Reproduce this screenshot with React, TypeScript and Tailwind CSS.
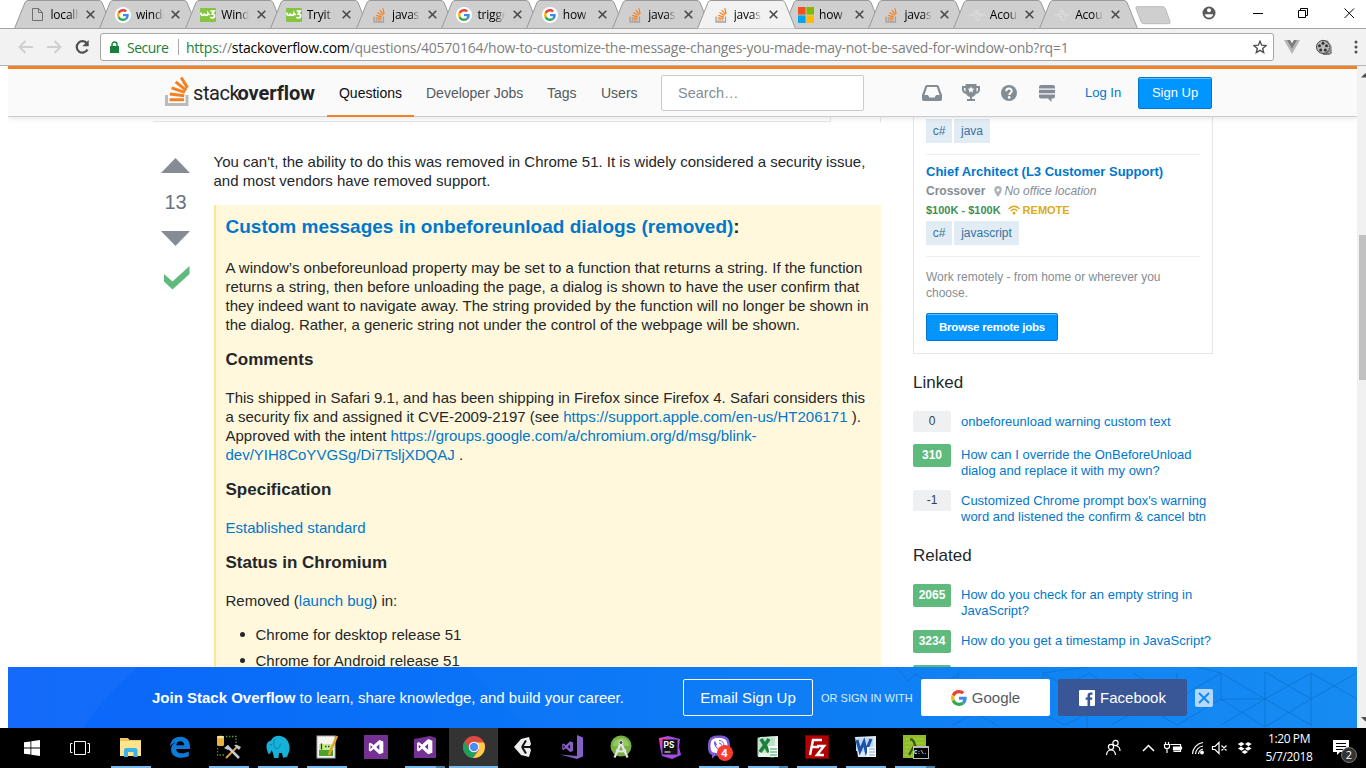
import React from "react";

type Kids = { children?: React.ReactNode; className?: string };

/* ---------- favicons ---------- */
const GoogleG = ({ size = 16 }: { size?: number }) => (
  <svg width={size} height={size} viewBox="0 0 48 48">
    <path fill="#EA4335" d="M24 9.5c3.54 0 6.71 1.22 9.21 3.6l6.85-6.85C35.9 2.38 30.47 0 24 0 14.62 0 6.51 5.38 2.56 13.22l7.98 6.19C12.43 13.72 17.74 9.5 24 9.5z" />
    <path fill="#4285F4" d="M46.98 24.55c0-1.57-.15-3.09-.38-4.55H24v9.02h12.94c-.58 2.96-2.26 5.48-4.78 7.18l7.73 6c4.51-4.18 7.09-10.36 7.09-17.65z" />
    <path fill="#FBBC05" d="M10.53 28.59c-.48-1.45-.76-2.99-.76-4.59s.27-3.14.76-4.59l-7.98-6.19C.92 16.46 0 20.12 0 24c0 3.88.92 7.54 2.56 10.78l7.97-6.19z" />
    <path fill="#34A853" d="M24 48c6.48 0 11.93-2.13 15.89-5.81l-7.73-6c-2.15 1.45-4.92 2.3-8.16 2.3-6.26 0-11.57-4.22-13.47-9.91l-7.98 6.19C6.51 42.62 14.62 48 24 48z" />
  </svg>
);

const favicons: Record<string, React.ReactNode> = {
  file: (
    <svg width="16" height="16" viewBox="0 0 16 16" fill="none" stroke="#6e6e6e">
      <path d="M2.500 1.500h6l4 4v8h-10z M8.500 1.500v4h4" />
    </svg>
  ),
  google: (
    <span className="flex h-4 w-4 items-center justify-center rounded-full bg-white">
      <GoogleG size={12} />
    </span>
  ),
  w3: (
    <svg width="16" height="16" viewBox="0 0 16 16" fill="none" stroke="#fff" strokeWidth="1.700">
      <rect width="16" height="14" y="1" rx="1" fill="#85c440" stroke="none" />
      <path d="M1 5.500v1.200q0 1.600 1.500 1.600T4.300 6.500q.2 1.800 1.800 1.800T8 6.500q.5 1.300 1.800.8" />
      <path d="M10.500 4h3.700l-2 2.800q2.400 0 2.400 2t-2.200 2.200q-1.300 0-2-.9" />
    </svg>
  ),
  so: (
    <svg width="16" height="16" viewBox="0 0 16 16" fill="none">
      <path d="M3 9.500v5.500h9.500v-5.500" stroke="#a0a2a4" strokeWidth="1.300" />
      <path d="M4.500 13h6M4.600 10.900l6 .5M5.200 8.300l5.600 1.600M6.500 5.400l5 3M8.800 3l3.700 4.700M11.800 1.200l1.400 5.700" stroke="#f48024" strokeWidth="1.200" />
    </svg>
  ),
  ms: (
    <svg width="16" height="16" viewBox="0 0 16 16">
      <path fill="#f25022" d="M0 0h7.600v7.600H0z" />
      <path fill="#7fba00" d="M8.400 0H16v7.600H8.400z" />
      <path fill="#00a4ef" d="M0 8.400h7.600V16H0z" />
      <path fill="#ffb900" d="M8.400 8.400H16V16H8.400z" />
    </svg>
  ),
  acou: (
    <svg width="16" height="16" viewBox="0 0 16 16" stroke="#e0e0e0" strokeWidth="1.100" fill="none">
      <path d="M0 8h4M12 8h4M5 6v4M7 5v2M7 9v4M9 3v5M11 6v4M5 4h3M8 13h3" />
    </svg>
  ),
};

const tabs = [
  { icon: "file", text: "localh" },
  { icon: "google", text: "windo" },
  { icon: "w3", text: "Wind" },
  { icon: "w3", text: "Tryit E" },
  { icon: "so", text: "javas" },
  { icon: "google", text: "trigge" },
  { icon: "google", text: "how" },
  { icon: "so", text: "javas" },
  { icon: "so", text: "javas", active: true },
  { icon: "ms", text: "how" },
  { icon: "so", text: "javas" },
  { icon: "acou", text: "Acou" },
  { icon: "acou", text: "Acou" },
];

const Tab = ({ icon, text, active }: { icon: string; text: string; active?: boolean }) => (
  <div className={"relative h-[29px] w-[85.4px] shrink-0 " + (active ? "z-10" : "")}>
    <svg className="absolute top-0 left-0 overflow-visible" width="99" height="29" viewBox="0 0 99 29">
      <path d="M0.500 28.500 L11 2.500 Q12 .5 14 .5 L85 .5 Q87 .5 88 2.500 L98.500 28.500 Z" fill={active ? "#f2f2f2" : "#cfcfcf"} />
      <path d="M0.500 28.500 L11 2.500 Q12 .5 14 .5 L85 .5 Q87 .5 88 2.500 L98.500 28.500" fill="none" stroke="#999" />
      {!active && <path d="M0 28.500H99" stroke="#a3a3a3" />}
    </svg>
    <div className="relative flex h-[29px] items-center pl-[15.500px]">
      <span className="flex w-[16px]">{favicons[icon]}</span>
      <span className="ml-[5px] w-[28px] bg-linear-to-r from-black from-65% to-transparent bg-clip-text font-['Open_Sans',sans-serif] text-[12px] tracking-[-0.2px] whitespace-nowrap text-transparent">
        {text}
      </span>
      <svg className="ml-[7.500px]" width="9" height="9" viewBox="0 0 9 9" stroke="#4a4a4a" strokeWidth="1.600">
        <path d="M.7.7l7.600 7.600M8.300.7L.7 8.300" />
      </svg>
    </div>
  </div>
);

const TabStrip = () => (
  <div className="relative flex h-[29px] items-start bg-white pl-[14px]">
    <div className="absolute bottom-0 left-0 h-px w-full bg-[#a3a3a3]" />
    {tabs.map((t, i) => (
      <Tab key={i} {...t} />
    ))}
    <svg className="mt-[6px] ml-[11px] shrink-0" width="36" height="19" viewBox="0 0 36 19">
      <path d="M2 .7h25.500q2 0 3 2l4.500 13q.5 2-1.500 2H9q-2 0-3-2L1 2.500Q.5.700 2 .7z" fill="#cfcfcf" stroke="#bbb" />
    </svg>
    <svg className="mt-[5px] ml-[30px] shrink-0" width="16" height="16" viewBox="0 0 16 16">
      <circle cx="8" cy="8" r="6.500" fill="#5a5a5a" />
      <circle cx="8" cy="5.300" r="2" fill="#fff" />
      <path d="M3.800 9.200h8.400a4.300 4.300 0 0 1-8.400 0z" fill="#fff" />
    </svg>
    <svg className="mt-[6px] ml-[34px] shrink-0" width="110" height="14" viewBox="0 0 110 14" fill="none" stroke="#000" strokeWidth="1">
      <path d="M2 7.500h10M47.500 4.500h7v7h-7zM49.500 4.500v-2h7v7h-2" />
      <path d="M93.500 2.500l9.500 9.500M103 2.500l-9.500 9.500" />
    </svg>
  </div>
);

const Toolbar = () => (
  <div className="flex h-[37px] items-center border-b border-[#b6b4b6] bg-[#f2f2f2]">
    <svg className="ml-[18px]" width="78" height="18" viewBox="0 0 78 18" fill="none" stroke="#cfcfcf" strokeWidth="1.800">
      <path d="M15 9H2M7.500 3L1.500 9l6 6M29 9h13M36.500 3l6 6-6 6" />
      <path d="M69 5.500A5.700 5.700 0 1 0 69.500 11.500" stroke="#505050" strokeWidth="2.200" />
      <path d="M70.700 2v6.300h-6.300z" fill="#505050" stroke="none" />
    </svg>
    <div className="ml-[4px] flex h-[28px] w-[1174px] items-center rounded-[3px] border border-[#a6a6a6] bg-white font-['Open_Sans',sans-serif] text-[14px] whitespace-nowrap">
      <svg className="ml-[9px]" width="9" height="12" viewBox="0 0 9 12">
        <path d="M0 5h9v7H0z" fill="#188038" />
        <path d="M2 5.500V3.500a2.500 2.500 0 0 1 5 0v2" fill="none" stroke="#188038" strokeWidth="1.400" />
      </svg>
      <span className="ml-[8px] w-[51px] tracking-[-0.5px] text-[#188038]">Secure</span>
      <span className="h-[16px] w-px bg-[#aaa]" />
      <span className="ml-[7px] w-[1067px] tracking-[-0.24px] text-[#808080]">
        <span className="text-[#188038]">https</span>://<span className="text-black">stackoverflow.com</span>
        /questions/40570164/how-to-customize-the-message-changes-you-made-may-not-be-saved-for-window-onb?rq=1
      </span>
      <svg width="14" height="14" viewBox="0 0 14 14" fill="none" stroke="#505050" strokeWidth="1.400">
        <path d="M7 1.200l1.700 4 4.300.4-3.300 2.800 1 4.200L7 10.400l-3.700 2.200 1-4.200L1 5.600l4.300-.4z" />
      </svg>
    </div>
    <svg className="ml-[10px]" width="16" height="14" viewBox="0 0 16 14">
      <path d="M0 0h6l2 3.500L10 0h6L8 14z" fill="#b5b5b5" />
      <path d="M3 0h3l2 3.500L10 0h3L8 8.800z" fill="#7d7d7d" />
    </svg>
    <svg className="ml-[16px]" width="17" height="17" viewBox="0 0 17 17">
      <path d="M6 .8l6 1 3.500 5.500.5 7-3 1.700H7z" fill="#777" />
      <circle cx="7" cy="8" r="6.500" fill="#b9b9b9" stroke="#444" />
      <g fill="#333">
        <circle cx="7" cy="4.200" r="1.500" /><circle cx="10.500" cy="6.800" r="1.500" /><circle cx="9.300" cy="11" r="1.500" /><circle cx="4.700" cy="11" r="1.500" /><circle cx="3.500" cy="6.800" r="1.500" />
      </g>
      <path d="M13 3v12M15 7v8" stroke="#ddd" strokeDasharray="1 1.500" />
    </svg>
    <svg className="ml-[21px] shrink-0" width="4" height="14" viewBox="0 0 4 14" fill="#505050">
      <circle cx="2" cy="2" r="1.500" /><circle cx="2" cy="7" r="1.500" /><circle cx="2" cy="12" r="1.500" />
    </svg>
  </div>
);

/* ---------- site header ---------- */
const Header = () => (
  <header className="relative z-10 flex h-[51px] w-full shrink-0 border-t-[3px] border-b border-t-[#f48024] border-b-[#cbccce] bg-[#fafafb] pl-[156px] shadow-[0_1px_6px_rgba(12,13,14,0.12)]">
    <svg className="mt-[7px]" width="26" height="31" viewBox="0 0 26 31" fill="none">
      <path d="M2.500 19v9.500h20.500V19" stroke="#bcbbbb" strokeWidth="3" />
      <path d="M5.500 23.700h14.500M5.900 18l14.300 1.700M7.600 11.800l13.300 4.500M11.700 5.800l10.500 8.600M17.200 1.500l6.300 10.400" stroke="#f48024" strokeWidth="3" />
    </svg>
    <div className="mt-[10px] ml-[3px] flex h-[28px] w-[123px] font-['Roboto',sans-serif] text-[20px] leading-[28px] whitespace-nowrap text-[#222426]">
      <span className="w-[44.500px] tracking-[-0.4px]">stack</span>
      <span className="font-bold tracking-[-0.05px]">overflow</span>
    </div>
    <nav className="ml-[11px] flex h-[48px] text-[14px] leading-[48px] whitespace-nowrap text-[#535a60]">
      <span className="h-[48px] w-[87px] border-b-2 border-[#f48024] text-center text-[#0c0d0e]">Questions</span>
      <span className="ml-[12px] w-[121px]">Developer Jobs</span>
      <span className="w-[54px]">Tags</span>
      <span className="w-[60px]">Users</span>
    </nav>
    <div className="mt-[6px] h-[36px] w-[203px] rounded-[2px] border border-[#c8ccd0] bg-white pl-[16px] text-[14.500px] leading-[34px] text-[#848d95]">Search…</div>
    <svg className="mt-[15px] ml-[58px]" width="20" height="18" viewBox="0 0 20 18">
      <path fill="#848d95" fillRule="evenodd" d="M5 1h10a2 2 0 0 1 1.700 1L20 11v4a2 2 0 0 1-2 2H2a2 2 0 0 1-2-2v-4L3.300 2A2 2 0 0 1 5 1zm.2 2L2.500 11h3.300l1.700 2.500h5l1.700-2.500h3.300L14.800 3z" />
    </svg>
    <svg className="mt-[15px] ml-[20px]" width="18" height="18" viewBox="0 0 18 18">
      <path fill="#848d95" fillRule="evenodd" d="M3.500 0h11v2H18v3.500c0 2.600-1.700 4.200-4.200 4.500-.9 1.700-2.300 2.700-3.800 3v2h3v2H5v-2h3v-2c-1.500-.3-2.900-1.300-3.800-3C1.700 9.700 0 8.100 0 5.500V2h3.500zM2 4v1.500c0 1 .5 1.900 1.500 2.200V4zm14 0h-1.500v3.700c1-.3 1.500-1.200 1.500-2.200zM9 2.500l-1 2-2.200.3 1.600 1.600L7 8.600l2-1.100 2 1.100-.4-2.200 1.600-1.600-2.200-.3z" />
    </svg>
    <svg className="mt-[16px] ml-[21px]" width="16" height="16" viewBox="0 0 16 16">
      <circle cx="8" cy="8" r="8" fill="#848d95" />
      <path d="M5.200 6.300C5.200 2.600 10.800 2.700 10.800 6c0 1.900-2.500 1.900-2.500 3.900" stroke="#fff" strokeWidth="1.900" fill="none" />
      <circle cx="8.200" cy="12.400" r="1.300" fill="#fff" />
    </svg>
    <svg className="mt-[16px] ml-[22px]" width="16" height="17" viewBox="0 0 16 17" fill="#848d95">
      <path d="M2 0h12q2 0 2 2v1.500H0V2q0-2 2-2zM0 4.700h16v3.600H0zM0 9.500h16v2.300q0 1.700-2 1.700h-1.500V17L9 13.500H2q-2 0-2-1.700z" />
    </svg>
    <span className="ml-[30px] w-[53px] text-[13px] leading-[47px] whitespace-nowrap text-[#0077cc]">Log In</span>
    <div className="mt-[8px] h-[32px] w-[74px] rounded-[2px] border border-[#0077cc] bg-[#0095ff] text-center text-[13px] leading-[30px] whitespace-nowrap text-white shadow-[inset_0_1px_0_#66bfff]">Sign Up</div>
  </header>
);

/* ---------- post ---------- */
const P = ({ children, className = "" }: Kids) => (
  <div className={"h-[19px] text-[15px] leading-[19px] whitespace-nowrap " + className}>{children}</div>
);
const H = ({ children }: Kids) => (
  <div className="mt-[16px] mb-[19px] h-[19px] text-[17px] leading-[19px] font-bold whitespace-nowrap">{children}</div>
);
const A = ({ children, className = "" }: Kids) => <span className={"text-[#0077cc] " + className}>{children}</span>;

const Post = () => (
  <div className="flex w-[728px] shrink-0 flex-col text-[#242729]">
    <div className="flex h-[5px] shrink-0">
      <div className="w-[678px] border-r border-b border-[#e4e6e8]" />
      <div className="w-[50px] border-r border-[#e4e6e8]" />
    </div>
    <div className="flex">
      <div className="flex w-[60px] flex-col pl-[8px]">
        <svg className="mt-[36px]" width="29" height="15" viewBox="0 0 29 15"><path d="M0 15L14.500 0 29 15z" fill="#858c93" /></svg>
        <div className="mt-[17px] h-[23px] w-[29px] text-center text-[20px] leading-[25px] text-[#6a737c]">13</div>
        <svg className="mt-[18px]" width="29" height="15" viewBox="0 0 29 15"><path d="M0 0L14.500 15 29 0z" fill="#858c93" /></svg>
        <svg className="mt-[20px] ml-[3px]" width="26" height="24" viewBox="0 0 26 24"><path d="M0 8l8.500 7.500L25.500 0v8L8.500 23.500 0 15.500z" fill="#5fba7d" /></svg>
      </div>
      <div className="mt-[30px] ml-[0.500px] flex w-[667.500px] flex-col">
        <P>You can't, the ability to do this was removed in Chrome 51. It is widely considered a security issue,</P>
        <P>and most vendors have removed support.</P>
        <div className="mt-[15px] h-[480px] border-l-2 border-[#ffe78c] bg-[#fff8dc] pl-[10px]">
          <div className="mb-[28px] pt-[9px] text-[19px] leading-[25px] font-bold whitespace-nowrap"><A>Custom messages in onbeforeunload dialogs (removed)</A>:</div>
          <div className="-mt-[9px]">
            <P>A window’s onbeforeunload property may be set to a function that returns a string. If the function</P>
            <P>returns a string, then before unloading the page, a dialog is shown to have the user confirm that</P>
            <P>they indeed want to navigate away. The string provided by the function will no longer be shown in</P>
            <P>the dialog. Rather, a generic string not under the control of the webpage will be shown.</P>
          </div>
          <H>Comments</H>
          <P>This shipped in Safari 9.1, and has been shipping in Firefox since Firefox 4. Safari considers this</P>
          <P>a security fix and assigned it CVE-2009-2197 (see <A>https://support.apple.com/en-us/HT206171</A> ).</P>
          <P>Approved with the intent <A>https://groups.google.com/a/chromium.org/d/msg/blink-</A></P>
          <P><A>dev/YIH8CoYVGSg/Di7TsljXDQAJ</A> .</P>
          <H>Specification</H>
          <P><A>Established standard</A></P>
          <H>Status in Chromium</H>
          <P>Removed (<A>launch bug</A>) in:</P>
          {["Chrome for desktop release 51", "Chrome for Android release 51"].map((t, i) => (
            <div key={t} className={"flex items-center pl-[14px] " + (i ? "mt-[7px]" : "mt-[15px]")}>
              <span className="mr-[11px] h-[5px] w-[5px] rounded-full bg-[#242729]" />
              <P>{t}</P>
            </div>
          ))}
        </div>
      </div>
    </div>
  </div>
);

/* ---------- sidebar ---------- */
const Tag = ({ children, className = "" }: Kids) => (
  <span className={"h-[24px] bg-[#e1ecf4] text-center text-[12px] leading-[24px] text-[#39739d] " + className}>{children}</span>
);

const QLink = ({ n, green, lines }: { n: string; green?: boolean; lines: string[] }) => (
  <div className="flex">
    <span className={"w-[38px] shrink-0 rounded-[2px] text-center text-[12px] " + (green ? "h-[23px] bg-[#5fba7d] leading-[23px] font-bold text-white" : "h-[21px] bg-[#eff0f1] leading-[21px] text-[#3b4045]")}>{n}</span>
    <span className="-mb-px ml-[10px] flex flex-col pt-[3px] text-[13px] leading-[16px] whitespace-nowrap text-[#0077cc]">
      {lines.map((l) => (
        <span key={l}>{l}</span>
      ))}
    </span>
  </div>
);

const Sidebar = () => (
  <aside className="ml-[32px] flex w-[300px] flex-col">
    <div className="flex h-[237px] shrink-0 flex-col border border-t-0 border-[#e4e6e8] px-[12px] text-[12px] whitespace-nowrap">
      <div className="mt-[2px] flex gap-[2px]"><Tag className="w-[26px]">c#</Tag><Tag className="w-[36px]">java</Tag></div>
      <div className="mt-[11px] h-px bg-[#edeff0]" />
      <div className="mt-[8px] h-[18px] text-[13px] leading-[18px] font-bold text-[#0077cc]">Chief Architect (L3 Customer Support)</div>
      <div className="mt-[1px] flex h-[18px] items-center leading-[18px] text-[#848d95]">
        <b>Crossover</b>
        <svg className="mr-[2px] ml-[9px]" width="8" height="11" viewBox="0 0 8 11"><path fillRule="evenodd" d="M4 0a3.800 3.800 0 0 1 3.800 3.800C7.800 6.500 4 11 4 11S.2 6.500.2 3.800A3.800 3.800 0 0 1 4 0zm0 2.400a1.500 1.500 0 1 0 0 3 1.500 1.500 0 0 0 0-3z" fill="#b0b4b8" /></svg>
        <i>No office location</i>
      </div>
      <div className="mt-[1px] flex h-[18px] items-center text-[11px] leading-[18px] font-bold">
        <span className="text-[#3d8f58]">$100K - $100K</span>
        <svg className="mr-[3px] ml-[7px]" width="12" height="10" viewBox="0 0 12 10" fill="none" stroke="#dbab1d" strokeWidth="1.500"><path d="M.5 4Q6-1.500 11.500 4M2.700 6Q6 2.600 9.300 6" /><circle cx="6" cy="8" r="1.500" fill="#dbab1d" stroke="none" /></svg>
        <span className="text-[#dbab1d]">REMOTE</span>
      </div>
      <div className="mt-[2px] flex gap-[2px]"><Tag className="w-[26px]">c#</Tag><Tag className="w-[65px]">javascript</Tag></div>
      <div className="mt-[11px] h-px bg-[#edeff0]" />
      <div className="mt-[12px] h-[32px] leading-[16px] text-[#848d95]">Work remotely - from home or wherever you<br />choose.</div>
      <div className="mt-[12px] h-[28px] w-[132px] shrink-0 rounded-[2px] border border-[#0077cc] bg-[#0095ff] text-center text-[11.500px] leading-[26px] font-bold tracking-[-0.22px] text-white shadow-[inset_0_1px_0_#66bfff]">Browse remote jobs</div>
    </div>
    <div className="mt-[18px] h-[22px] shrink-0 text-[17px] leading-[22px]">Linked</div>
    <div className="mt-[17px] flex shrink-0 flex-col gap-[12px]">
      <QLink n="0" lines={["onbeforeunload warning custom text"]} />
      <QLink n="310" green lines={["How can I override the OnBeforeUnload", "dialog and replace it with my own?"]} />
      <QLink n="-1" lines={["Customized Chrome prompt box's warning", "word and listened the confirm & cancel btn"]} />
    </div>
    <div className="mt-[21px] h-[22px] shrink-0 text-[17px] leading-[22px]">Related</div>
    <div className="mt-[17px] flex shrink-0 flex-col gap-[12px]">
      <QLink n="2065" green lines={["How do you check for an empty string in", "JavaScript?"]} />
      <QLink n="3234" green lines={["How do you get a timestamp in JavaScript?"]} />
      <QLink n="" green lines={[]} />
    </div>
  </aside>
);

/* ---------- sign-up banner ---------- */
const Banner = () => (
  <div className="relative z-10 h-[61px] w-full shrink-0 bg-linear-to-r from-[#0c65fa] to-[#128af2] text-white">
    <svg className="absolute inset-0" width="1349" height="61" viewBox="0 0 1349 61" fill="none">
      <path d="M0 0H130Q95 30 75 61H0z" fill="#fff" opacity=".035" />
      <path d="M460 0H1349V61H518Z" fill="#fff" opacity=".02" />
      <g stroke="#0b6fc9" strokeWidth="1" opacity=".65">
        <path d="M888 0l12 14 10-8M905 6l25 14 22-14M950 6v14l22 12 22-12M1035 6l45-6M1035 6l22 13 24-13M1035 6v30M1102 19l-22-13M1213 6l44 26 46-26M1213 6v26l44 28M1257 5v55M1303 6v26l-46-27M1303 6l46 26M1303 32l-46 28M1303 32l46-26M1213 32l-44 26-24-14M1213 32l44 0M1303 32v28M1169 6v20l-24 14M1125 6l44 26 44-26M1190 0l23 6M1257 32l46 26M1213 58l44-26M945 58l22-12 22 12M1033 46l24 12 24-12M1079 46v15M1125 46l-22 12" />
      </g>
    </svg>
    <div className="relative flex h-full items-center pl-[144px] text-[15px] whitespace-nowrap">
      <div className="w-[531px] pt-[2px]"><b>Join Stack Overflow</b> to learn, share knowledge, and build your career.</div>
      <div className="h-[37px] w-[130px] rounded-[2px] border border-white text-center text-[15px] tracking-[0.05px] leading-[35px]">Email Sign Up</div>
      <div className="ml-[8px] w-[100px] pt-px text-[11px] text-[#dcecfe]">OR SIGN IN WITH</div>
      <div className="flex h-[37px] w-[129px] items-center justify-center gap-[5px] rounded-[2px] bg-white text-[15px] text-[#535a60]"><GoogleG size={16} /><span className="pt-px">Google</span></div>
      <div className="ml-[8px] flex h-[37px] w-[129px] items-center justify-center gap-[5px] rounded-[2px] bg-[#395697] text-[15px]">
        <svg width="16" height="16" viewBox="0 0 16 16"><rect width="16" height="16" rx="1" fill="#fff" /><path d="M8.500 16V9.800H6.600V7.500h1.900V5.700c0-2.100 1.300-3.200 3.200-3.200h1.800v2.200h-1.200c-.9 0-1.200.5-1.200 1.200v1.600h2.300l-.3 2.300h-2V16z" fill="#395697" /></svg>
        <span className="pt-px">Facebook</span>
      </div>
      <svg className="ml-[8px]" width="18" height="18" viewBox="0 0 18 18"><rect width="18" height="18" rx="2" fill="#b4d9fc" /><path d="M4 4l10 10M14 4L4 14" stroke="#128af2" strokeWidth="2" /></svg>
    </div>
  </div>
);

const ScrollBar = () => (
  <div className="flex w-[9px] shrink-0 flex-col overflow-hidden bg-[#f1f1f1]">
    <svg className="mt-[7px] ml-[4px] shrink-0" width="9" height="5" viewBox="0 0 9 5"><path d="M0 4.500L4.500 0 9 4.500z" fill="#505050" /></svg>
    <div className="mt-[157px] ml-[2px] h-[145px] w-[7px] bg-[#c1c1c1]" />
    <svg className="mt-[337px] ml-[4px] shrink-0" width="9" height="5" viewBox="0 0 9 5"><path d="M0 0h9L4.500 4.500z" fill="#505050" /></svg>
  </div>
);

/* ---------- taskbar ---------- */
const I = ({ children }: Kids) => (
  <svg width="24" height="24" viewBox="0 0 24 24" fill="none">{children}</svg>
);

type TaskApp = { icon: React.ReactNode; line?: "one" | "two"; active?: boolean };
const vsMark = "M16 3l5 2v14l-5 2-7-6.500-4 3L3 16.500v-9L5 6.500l4 3zM16 8.500L12.200 12l3.800 3.500zM5 9.500v5L7.500 12z";
const apps: TaskApp[] = [
  { line: "one", icon: <I><path d="M1 3h8l1.500 2H22v16H1z" fill="#f0c75c" /><path d="M1 6h21v15H1z" fill="#ffe48f" /><path d="M5 22v-7q0-2 2-2h9.500q2 0 2 2v7h-4v-5h-5.500v5z" fill="#3cb3e8" /></I> },
  { icon: <I><path d="M2 11.500C3 4.500 7 1.700 12.300 1.700 18.500 1.700 22 6 22 11.500V14H8.200c.2 3 2.500 4.300 5.800 4.300 2.500 0 4.700-.6 6.800-1.800v4.600c-2 1.100-4.600 1.700-7.500 1.700C7 22.800 3 19.500 3 14.500 3 11.300 5 8.500 8 7.300 5.500 7.700 3.400 9.200 2 11.500zM8.300 10.300h7.900c0-2.500-1.400-4-3.800-4-2.300 0-3.800 1.500-4.100 4z" fill="#0b7ad8" /></I> },
  { line: "one", icon: <I><rect x="0" y="1" width="7" height="10" rx="1.500" fill="#e8b13a" /><ellipse cx="3.500" cy="2" rx="3.500" ry="1.300" fill="#ffe6a0" /><path d="M9 1.500h10v9M.5 13v7h8" stroke="#4c9a2a" strokeDasharray="1.500 1.500" strokeWidth="1.300" /><path d="M9 23L20 12" stroke="#e0a03a" strokeWidth="2" /><path d="M10 11l12 12" stroke="#c9ccd0" strokeWidth="2.500" /><path d="M7 13l4-3 2 3-2 2zM17 10l5 5 2-3-4-2z" fill="#c0c9d3" /></I> },
  { line: "one", icon: <I><path d="M1 15C-.5 10 1 6 5 5.500 7 1 13 0 16 1.500c4 1 7 5 7.500 10 .3 3-.5 6-1.500 8l-1 2.500-4 .8-1-4.800h-3l-.5 5H8l-1-5-1.500-3C5 17 4 19.500 2.500 19z" fill="#16b0d9" /><path d="M9 4c-2 4-1.500 8 1 9.500 3 .5 4-2 4.500-5" stroke="#0785ab" strokeWidth="1" /><path d="M4.500 9.500l1 .6" stroke="#03415a" /></I> },
  { line: "one", icon: <I><rect x="2" y="1" width="18" height="22" fill="#f4f6ee" stroke="#a7adb0" /><path d="M4 9h14v7H4z" fill="#c5ee8b" /><path d="M4 15h14v6H4z" fill="#4ba22a" /><path d="M6.500 8.500v6M10 11.500h1.500M13 11.500h1.500" stroke="#333" strokeWidth="1.300" /><path d="M22 1L15 17l-1 3" stroke="#e8a02c" strokeWidth="2.500" /></I> },
  { icon: <I><rect width="24" height="24" fill="#743092" /><path transform="translate(2.500 2.500) scale(.8)" d={vsMark} fill="#fff" fillRule="evenodd" /></I> },
  { line: "two", icon: <I><path d="M1 4l16-3 6 2v20l-6 0H1z" fill="#743092" /><path transform="translate(1.500 1.500) scale(.85)" d={vsMark} fill="#fff" fillRule="evenodd" /></I> },
  { active: true, icon: <I><circle cx="12" cy="12" r="11" fill="#dd4b3e" /><path d="M2.500 6.500A11 11 0 0 0 11 23l5-9-4 3-4.500-3z" fill="#1da160" /><path d="M11 23A11 11 0 0 0 22 7.500H12.500L17 11v4z" fill="#fdcd46" /><circle cx="12" cy="12" r="5.200" fill="#fff" /><circle cx="12" cy="12" r="4.200" fill="#4c8bf5" /></I> },
  { icon: <I><path fill="#eee" d="M3 12L10 4l8-2 2 7-1.500 3 1.500 3-2 7-8-2z" /><path d="M11 12l4-6.500M11 12h8M11 12l4 6.500" stroke="#111" strokeWidth="2" /></I> },
  { icon: <I><path d="M17 0l6 2.500v19L17 24 0 19.500l17 1.500z" fill="#8661c5" /><path transform="translate(.5 4.500) scale(.6)" d={vsMark} fill="#8661c5" fillRule="evenodd" /></I> },
  { icon: <I><circle cx="12" cy="11" r="10.500" fill="#78b044" /><path d="M4 11a8 8 0 0 1 16 0z" fill="#93c860" /><path d="M12 8L5.500 22.500M12 8l6.500 14.500M7 15q5 3 10 0" stroke="#e6e6e6" strokeWidth="2.200" /><circle cx="12" cy="7.500" r="2" fill="#444" stroke="#eee" /></I> },
  { icon: <I><path d="M1 3l9-2 12 3-1 8 2 8-9 4-10-3L2 12z" fill="#a54be8" /><path d="M1 3l10 0-8 9z" fill="#ee3fa6" /><rect x="4.500" y="4.500" width="15" height="15" fill="#111" /><text x="5.500" y="12.500" fontSize="8.500" fontWeight="700" fill="#fff" fontFamily="Roboto">PS</text><path d="M6.500 17h6" stroke="#fff" /></I> },
  { line: "one", icon: <span className="relative"><I><path d="M12 .5C4 .5 1 3 1 11c0 5 1 8 4 9v3.500l3.500-3c11 1 14.500-1 14.500-9.500C23 3 20 .5 12 .5z" fill="#7d5bd6" /><path d="M12 3c-6 0-8.500 1.500-8.500 8s2 7 8.500 7 8.500-1 8.500-7S18 3 12 3z" fill="#fff" /><path d="M8 6c-2 1-1 4 1 6.500s5 4.500 6.500 2.500l-2-2-1.500 1c-1-.5-2.500-2-3-3.500l1-1z" fill="#7d5bd6" /><path d="M12 5.500q5 0 5 5.500M12 8q2.500 0 2.500 2.500" stroke="#7d5bd6" /></I><span className="absolute top-[10px] left-[10px] h-[16px] w-[16px] rounded-full bg-[#f83c31] text-center font-['Open_Sans',sans-serif] text-[11px] leading-[16px] font-bold text-white">4</span></span> },
  { line: "two", icon: <I><path d="M1 3l17-2v22L1 21z" fill="#1f8b43" /><path d="M4 2l18-1v21H2z" fill="#e8f3ea" /><path d="M2 2.500h17v17L2 17z" fill="#bfe0c7" /><path d="M5 4l8 13M13 4L4 17" stroke="#1c7f3c" strokeWidth="3.500" /><path d="M12 11h10v11H14z" fill="#f7faf7" /><path d="M14 14h7M14 17h7M14 20h7" stroke="#3c9c58" /></I> },
  { line: "one", icon: <I><rect x=".5" y=".5" width="23" height="23" fill="#b30000" stroke="#8a0000" strokeDasharray="2 1.500" /><path d="M5 20L8 5h9M7 12h7M12 11h7l-7 9h7" stroke="#fff" strokeWidth="2.500" /></I> },
  { line: "one", icon: <I><path d="M1 2l21-1v21l-18 0z" fill="#dfe9f6" /><path d="M2 3h17v15L2 16z" fill="#c2d6ee" /><path d="M3 5l3 11 4-9 2 9 5-12" stroke="#1c54a5" strokeWidth="3" /><path d="M13 12h9v10h-9z" fill="#f7f9fc" /><path d="M15 14h6M15 17h6M15 20h6" stroke="#8aa6c9" /></I> },
  { line: "two", icon: <span className="relative"><I><rect width="23" height="23" fill="#8fbc2b" /><path d="M2 4h19M2 8h19M2 12h19M2 16h19M2 20h19" stroke="#a5d13a" /><path d="M7 4.500q3-.5 4 3l4.500 12M11 11L6 20" stroke="#3c5010" strokeWidth="2.200" /></I><span className="absolute top-[11px] left-[10px] h-[13px] w-[16px] border border-t-2 border-[#bbb] bg-black text-center font-['Liberation_Mono',monospace] text-[5.500px] leading-[9px] font-bold text-white">C:\.</span></span> },
];

const Taskbar = () => (
  <div className="flex h-[40px] shrink-0 items-stretch bg-black text-white">
    <div className="ml-[8px] flex w-[48px] items-center justify-center">
      <svg width="16" height="16" viewBox="0 0 16 16" fill="#fff"><path d="M0 2.300L6.500 1.400v6.200H0zM7.300 1.300L16 0v7.600H7.300zM0 8.400h6.500v6.200L0 13.700zM7.300 8.400H16V16l-8.700-1.300z" /></svg>
    </div>
    <div className="flex w-[50px] items-center pl-[14px]">
      <svg width="20" height="14" viewBox="0 0 20 14" fill="none" stroke="#fff"><path d="M4.500.5h11v13h-11zM2.500 2.500h-2v9h2M17.500 2.500h2v9h-2" /></svg>
    </div>
    {apps.map((a, i) => (
      <div key={i} className={"flex w-[49px] shrink-0 flex-col items-center " + (a.active ? "bg-[#333]" : "")}>
        <div className="flex h-[38px] items-center">{a.icon}</div>
        {a.active && <div className="h-[2px] w-full bg-[#76b9ed]" />}
        {a.line === "one" && <div className="h-[2px] w-[40px] bg-[#76b9ed]" />}
        {a.line === "two" && <div className="flex h-[2px] w-[40px]"><div className="w-[31px] bg-[#76b9ed]" /><div className="w-[9px] bg-[#4d81a8]" /></div>}
      </div>
    ))}
    <div className="ml-[165px] flex shrink-0 items-center">
      <svg width="150" height="20" viewBox="0 0 150 20" fill="none" stroke="#fff" strokeWidth="1.200">
        <circle cx="7" cy="9" r="2.600" /><path d="M2.500 17q.5-5 4.500-5t4.500 5" /><circle cx="11.500" cy="5" r="2.600" /><path d="M12.500 8q3.500.5 3.500 5" />
        <path d="M39 13l5.500-5.500L50 13" strokeWidth="1.500" />
        <path d="M66.500 6.500h10v7h-7M77.500 8.500v3" /><path d="M69.500 9h6v3h-6z" fill="#fff" /><path d="M61.500 4v3M64.500 4v3M60.500 6.500h5v2q0 2-2.500 2t-2.500-2zM63 10.500V15" />
        <path d="M88.500 16A12 12 0 0 1 99 4.500M91.500 16A9 9 0 0 1 99 8M94.500 16a6 6 0 0 1 4.500-5" /><circle cx="98" cy="14.500" r="1.300" fill="#fff" />
        <path d="M108.500 8.500h2.500l4-4v11l-4-4h-2.500zM117.500 7.500l5 5M122.500 7.500l-5 5" />
        <path d="M137.500 4l3 2-3.500 2.200-3.200-2.200zM144 4l-3 2 3.500 2.200 3.200-2.200zM137 8.500l3.500 2.200-3 2-3.500-2.200zM144.500 8.500l-3.500 2.200 3 2 3.500-2.200zM141 12l3 2-3.200 2-3.300-2z" fill="#fff" stroke="none" />
      </svg>
    </div>
    <div className="ml-[5px] flex w-[60px] shrink-0 flex-col items-center justify-center font-['Open_Sans',sans-serif] text-[12px] leading-[18px] tracking-[-0.4px] whitespace-nowrap">
      <span>1:20 PM</span>
      <span>5/7/2018</span>
    </div>
    <div className="relative ml-[14px] w-[26px] shrink-0">
      <svg className="mt-[12px]" width="18" height="16" viewBox="0 0 18 16"><path d="M0 0h16v12H7l-3 3v-3H0z" fill="#fff" /><path d="M3 3.500h10M3 6.500h10M3 9.500h7" stroke="#000" /></svg>
      <span className="absolute top-[19px] left-[8px] h-[16px] w-[16px] rounded-full border border-[#777] bg-[#333] text-center font-['Open_Sans',sans-serif] text-[11px] leading-[14px]">2</span>
    </div>
  </div>
);

export default function App() {
  return (
    <div className="flex h-[768px] w-[1366px] flex-col overflow-hidden bg-white font-['Liberation_Sans',Arial,sans-serif] text-[#242729]">
      <TabStrip />
      <Toolbar />
      <div className="flex h-[662px] shrink-0 bg-white pl-[8px]">
        <div className="flex w-[1349px] shrink-0 flex-col overflow-hidden">
          <Header />
          <main className="flex h-[550px] shrink-0 overflow-hidden pl-[145px]">
            <Post />
            <Sidebar />
          </main>
          <Banner />
        </div>
        <ScrollBar />
      </div>
      <Taskbar />
    </div>
  );
}
